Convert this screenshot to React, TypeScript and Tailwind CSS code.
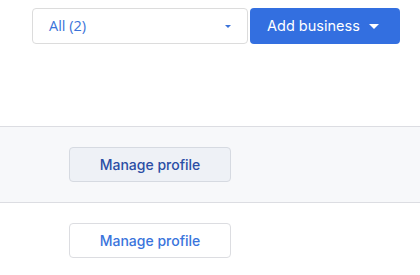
function Caret({ className }: { className?: string }) {
  return (
    <svg className={className} viewBox="0 0 10 5" fill="currentColor">
      <path d="M0 0h10L5 5z" />
    </svg>
  );
}

function ManageButton({ active }: { active?: boolean }) {
  return (
    <button
      className={
        "h-[35px] w-[162px] rounded-[4px] border text-[14px] font-medium font-['Inter',sans-serif] " +
        (active
          ? "border-[#d6dae1] bg-[#eef1f6] text-[#2b4ea5]"
          : "border-[#dcdde1] bg-white text-[#3a74dc]")
      }
    >
      Manage profile
    </button>
  );
}

export default function App() {
  return (
    <div className="h-[275px] w-[420px] overflow-hidden bg-white">
      <div className="flex justify-end gap-[2px] pr-[20px] pt-[8px]">
        <div className="flex h-[36px] w-[216px] items-center justify-between rounded-[4px] border border-[#dcdcdc] bg-white pl-[16px] pr-[16px] font-['Open_Sans',sans-serif] text-[14.5px] text-[#3b73d9]">
          <span>All (2)</span>
          <Caret className="h-[3px] w-[6px] text-[#3b73d9]" />
        </div>
        <button className="flex h-[36px] w-[150px] items-center justify-start gap-[9px] rounded-[4px] bg-[#336fe0] pl-[17px] font-['Inter',sans-serif] text-[14.5px] font-normal text-white">
          <span>Add business</span>
          <Caret className="h-[5px] w-[10px]" />
        </button>
      </div>

      <div className="mt-[82px] border-y border-[#dcdde2] bg-[#f7f8fa] pb-[20px] pl-[69px] pt-[20px]">
        <ManageButton active />
      </div>
      <div className="pl-[69px] pt-[20px]">
        <ManageButton />
      </div>
    </div>
  );
}
